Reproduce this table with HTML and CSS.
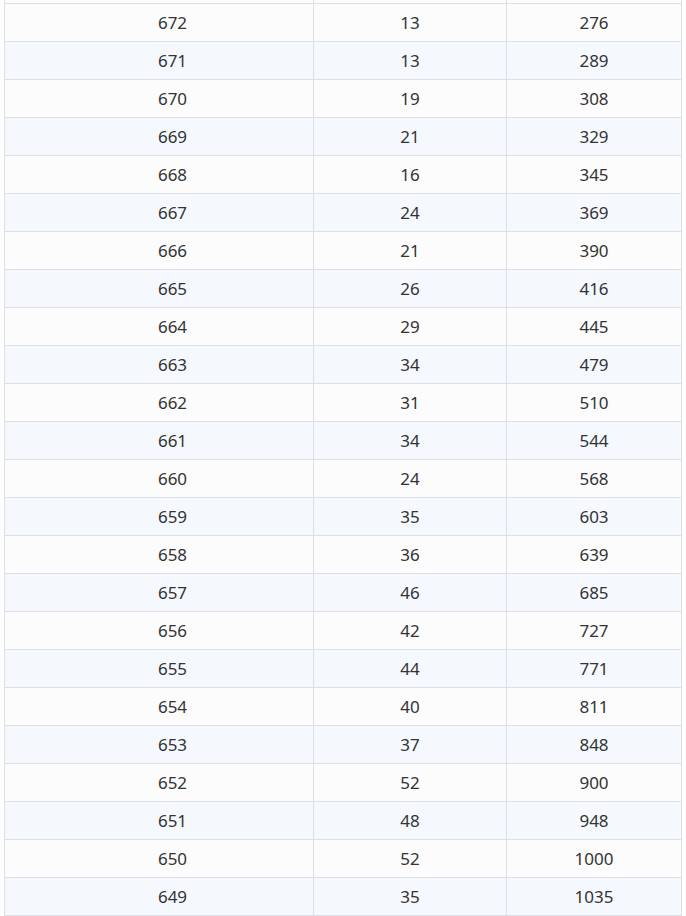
FILE: index.html
```html
<!DOCTYPE html>
<html>
<head>
<meta charset="utf-8">
<link rel="stylesheet" href="styles.css">
</head>
<body>
<table class="grid">
<tbody>
<tr class="even spacer"><td class="c1"></td><td class="c2"></td><td class="c3"></td></tr>
<tr><td class="c1">672</td><td class="c2">13</td><td class="c3">276</td></tr>
<tr class="even"><td class="c1">671</td><td class="c2">13</td><td class="c3">289</td></tr>
<tr><td class="c1">670</td><td class="c2">19</td><td class="c3">308</td></tr>
<tr class="even"><td class="c1">669</td><td class="c2">21</td><td class="c3">329</td></tr>
<tr><td class="c1">668</td><td class="c2">16</td><td class="c3">345</td></tr>
<tr class="even"><td class="c1">667</td><td class="c2">24</td><td class="c3">369</td></tr>
<tr><td class="c1">666</td><td class="c2">21</td><td class="c3">390</td></tr>
<tr class="even"><td class="c1">665</td><td class="c2">26</td><td class="c3">416</td></tr>
<tr><td class="c1">664</td><td class="c2">29</td><td class="c3">445</td></tr>
<tr class="even"><td class="c1">663</td><td class="c2">34</td><td class="c3">479</td></tr>
<tr><td class="c1">662</td><td class="c2">31</td><td class="c3">510</td></tr>
<tr class="even"><td class="c1">661</td><td class="c2">34</td><td class="c3">544</td></tr>
<tr><td class="c1">660</td><td class="c2">24</td><td class="c3">568</td></tr>
<tr class="even"><td class="c1">659</td><td class="c2">35</td><td class="c3">603</td></tr>
<tr><td class="c1">658</td><td class="c2">36</td><td class="c3">639</td></tr>
<tr class="even"><td class="c1">657</td><td class="c2">46</td><td class="c3">685</td></tr>
<tr><td class="c1">656</td><td class="c2">42</td><td class="c3">727</td></tr>
<tr class="even"><td class="c1">655</td><td class="c2">44</td><td class="c3">771</td></tr>
<tr><td class="c1">654</td><td class="c2">40</td><td class="c3">811</td></tr>
<tr class="even"><td class="c1">653</td><td class="c2">37</td><td class="c3">848</td></tr>
<tr><td class="c1">652</td><td class="c2">52</td><td class="c3">900</td></tr>
<tr class="even"><td class="c1">651</td><td class="c2">48</td><td class="c3">948</td></tr>
<tr><td class="c1">650</td><td class="c2">52</td><td class="c3">1000</td></tr>
<tr class="even"><td class="c1">649</td><td class="c2">35</td><td class="c3">1035</td></tr>
</tbody>
</table>
</body>
</html>
```

FILE: styles.css
```css
html, body {
  margin: 0;
  padding: 0;
  background: #ffffff;
}
body {
  padding-left: 4px;
  font-family: "Noto Sans", "Open Sans", sans-serif;
  font-size: 17px;
  color: #333333;
}
.grid {
  margin-top: -35px;
  border-collapse: collapse;
  width: 677px;
  table-layout: fixed;
}
.grid td {
  border: 1px solid #dcdfe6;
  height: 38px;
  padding: 0;
  box-sizing: border-box;
  text-align: center;
  vertical-align: middle;
  background: #fcfcfc;
  line-height: 20px;
}
.grid tr.even td {
  background: #f5f9fe;
}
.grid tr.spacer td {
  background: #fcfcfc;
}
.grid .c1 { width: 309px; padding-left: 27px; }
.grid .c2 { width: 193px; }
.grid .c3 { width: 175px; }
```
